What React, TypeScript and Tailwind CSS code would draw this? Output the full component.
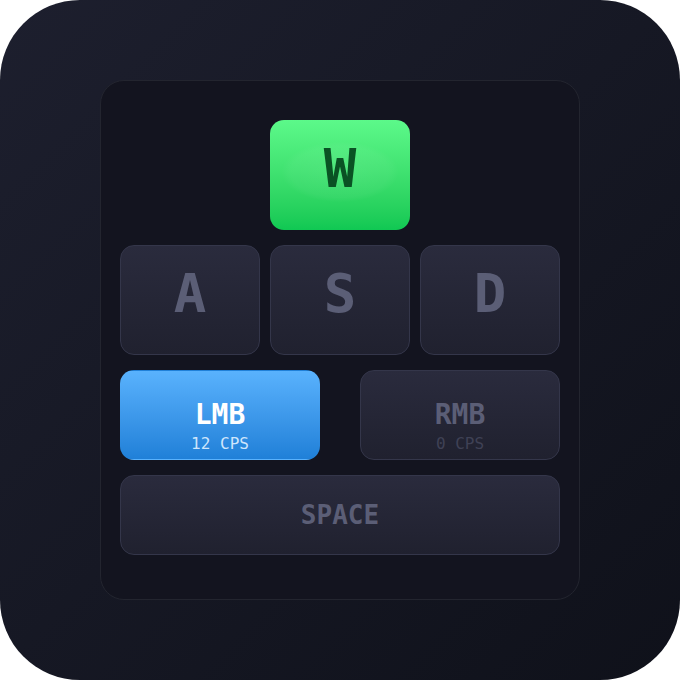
const mono = "font-['DejaVu_Sans_Mono',monospace]";

function LetterKey({ label, active = false }: { label: string; active?: boolean }) {
  if (active) {
    return (
      <div className="relative flex h-[110px] w-[140px] items-center justify-center overflow-hidden rounded-[14px] bg-gradient-to-b from-[#5cf98a] to-[#0fc853] pb-3">
        <div className="absolute inset-x-3 top-[22px] h-[60px] rounded-[50%] bg-[radial-gradient(ellipse_at_center,rgba(255,255,255,0.07),rgba(255,255,255,0.04)_60%,transparent_72%)]" />
        <span className={`${mono} relative text-[54px] font-bold leading-none text-[#0a5224]`}>{label}</span>
      </div>
    );
  }
  return (
    <div className="flex h-[110px] w-[140px] items-center justify-center rounded-[14px] border border-[#34364a] bg-gradient-to-b from-[#2a2b3d] to-[#20212f] pb-3">
      <span className={`${mono} text-[54px] font-bold leading-none text-[#5b5e76]`}>{label}</span>
    </div>
  );
}

function MouseKey({ label, cps, active = false }: { label: string; cps: number; active?: boolean }) {
  return (
    <div
      className={
        active
          ? 'flex h-[90px] w-[200px] flex-col items-center rounded-[14px] border border-transparent bg-gradient-to-b from-[#59b2fd] to-[#1f80d8] pt-[29px]'
          : 'flex h-[90px] w-[200px] flex-col items-center rounded-[14px] border border-[#34364a] bg-gradient-to-b from-[#2a2b3d] to-[#20212f] pt-[29px]'
      }
    >
      <span className={`${mono} text-[28px] font-bold leading-[30px] ${active ? 'text-white' : 'text-[#5b5e76]'}`}>{label}</span>
      <span className={`${mono} mt-[5px] text-[16px] leading-[18px] ${active ? 'text-[#cfe6fc]' : 'text-[#3f4155]'}`}>{cps} CPS</span>
    </div>
  );
}

export default function App() {
  return (
    <div className="h-[690px] w-[690px] bg-white">
      <div className="flex h-[680px] w-[680px] items-start justify-center rounded-[80px] bg-gradient-to-br from-[#1d1f2e] to-[#0f111a] pt-20">
        <div className="flex h-[520px] w-[480px] flex-col gap-[15px] rounded-[24px] border border-[#23252f] bg-[#13141f] px-[19px] pt-[39px]">
          <div className="flex justify-center">
            <LetterKey label="W" active />
          </div>
          <div className="flex gap-[10px]">
            <LetterKey label="A" />
            <LetterKey label="S" />
            <LetterKey label="D" />
          </div>
          <div className="flex justify-between">
            <MouseKey label="LMB" cps={12} active />
            <MouseKey label="RMB" cps={0} />
          </div>
          <div className="flex h-[80px] items-center justify-center rounded-[14px] border border-[#34364a] bg-gradient-to-b from-[#2a2b3d] to-[#20212f]">
            <span className={`${mono} text-[26px] font-bold leading-none text-[#5b5e76]`}>SPACE</span>
          </div>
        </div>
      </div>
    </div>
  );
}
